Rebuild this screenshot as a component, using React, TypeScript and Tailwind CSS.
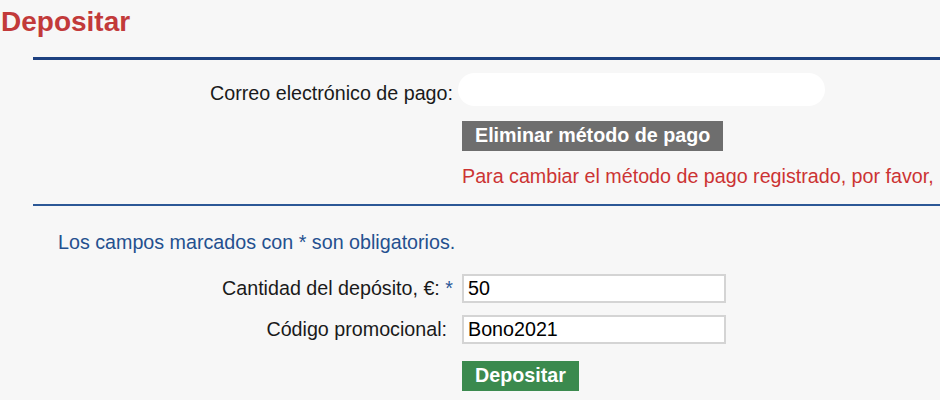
import React from "react";

const font = { fontFamily: '"Liberation Sans", Arial, sans-serif' };

function Row({
  label,
  children,
  className = "",
  labelClass = "",
}: {
  label: React.ReactNode;
  children: React.ReactNode;
  className?: string;
  labelClass?: string;
}) {
  return (
    <div className={"flex items-center " + className}>
      <div className={"w-[420px] shrink-0 text-right text-[19.7px] leading-[23px] text-[#1a1a1a] " + labelClass}>{label}</div>
      <div className="pl-[9px]">{children}</div>
    </div>
  );
}

export default function App() {
  return (
    <div className="min-h-[400px] w-[940px] overflow-hidden bg-[#f7f7f7]" style={font}>
      <h1 className="pl-[1px] pt-[6px] text-[28px] font-bold leading-[32px] text-[#c23a3a]">Depositar</h1>

      <section className="ml-[33px] mt-[19px] border-t-[3px] border-[#1e4180]">
        <Row label="Correo electrónico de pago:" className="mt-[13px]" labelClass="pt-[8px]">
          <div className="-ml-[4px] h-[33px] w-[367px] rounded-full bg-white" />
        </Row>
        <div className="ml-[429px] mt-[15px] inline-flex h-[30px] items-center bg-[#6e6e6e] px-[13px] text-[19.7px] font-bold text-white whitespace-nowrap">
          Eliminar método de pago
        </div>
        <div className="ml-[429px] mt-[14px] whitespace-nowrap text-[19.7px] leading-[23px] text-[#cc3333]">
          Para cambiar el método de pago registrado, por favor,
        </div>
      </section>

      <section className="ml-[33px] mt-[16px] border-t-2 border-[#2c5896]">
        <p className="ml-[25px] mt-[25px] text-[19.7px] leading-[23px] text-[#24508f]">
          Los campos marcados con * son obligatorios.
        </p>
        <div className="mt-[20px] flex flex-col gap-[12px]">
          <Row label={<>Cantidad del depósito, €: <span className="text-[#2b5797]">*</span></>}>
            <input
              readOnly
              value="50"
              className="h-[29px] w-[264px] border-2 border-[#d4d4d4] bg-white px-[4px] text-[19.7px] text-black outline-none"
            />
          </Row>
          <Row label={<span className="pr-[6px]">Código promocional:</span>}>
            <input
              readOnly
              value="Bono2021"
              className="h-[29px] w-[264px] border-2 border-[#d4d4d4] bg-white px-[4px] text-[19.7px] text-black outline-none"
            />
          </Row>
          <div className="ml-[429px] mt-[5px]">
            <div className="inline-flex h-[30px] items-center bg-[#3b8a4e] px-[13px] text-[19.7px] font-bold text-white">
              Depositar
            </div>
          </div>
        </div>
      </section>
    </div>
  );
}
